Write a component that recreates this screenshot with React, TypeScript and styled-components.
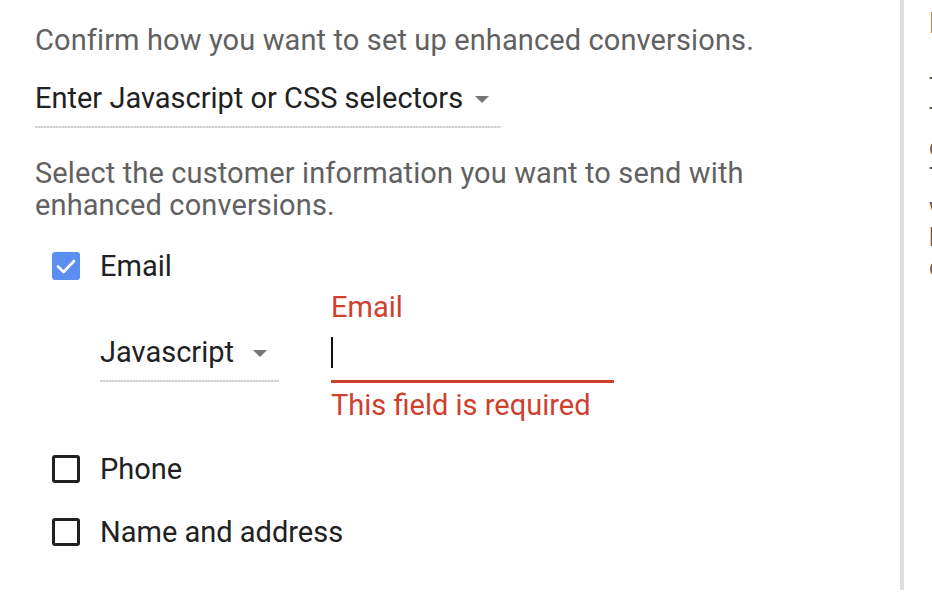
import React from "react";
import styled, { createGlobalStyle } from "styled-components";

const Global = createGlobalStyle`
  html, body { margin: 0; padding: 0; background: #fff; }
  body { font-family: Roboto, "Noto Sans", Arial, sans-serif; }
`;

const Page = styled.div`
  display: flex;
  width: 932px;
  height: 600px;
  overflow: hidden;
`;

const Main = styled.div`
  width: 900px;
  box-sizing: border-box;
  padding: 24px 0 0 35px;
  display: flex;
  flex-direction: column;
`;

const Divider = styled.div`
  width: 4px;
  height: 590px;
  background: #dedede;
  flex: none;
`;

const Side = styled.div`
  flex: 1;
  padding: 0 0 0 25px;
  overflow: hidden;
  white-space: nowrap;
  color: #555;
  font-size: 26px;
  line-height: 30px;
`;

const SideHeading = styled.div`
  margin-top: 8px;
  font-size: 30px;
  color: #333;
`;

const SideLine = styled.div<{ $gap?: number }>`
  margin-top: ${(p) => p.$gap ?? 0}px;
`;

const Prompt = styled.div<{ $mt?: number }>`
  font-size: 29px;
  line-height: 32px;
  color: #616161;
  margin-top: ${(p) => p.$mt ?? 0}px;
  max-width: 740px;
  letter-spacing: 0.12px;
`;

const Select = styled.div<{ $w: number; $mt?: number }>`
  width: ${(p) => p.$w}px;
  display: flex;
  align-items: center;
  height: 32px;
  padding-bottom: 14px;
  margin-top: ${(p) => p.$mt ?? 0}px;
  background-image: linear-gradient(to right, #cfcfcf 60%, #e6e6e6 60%);
  background-size: 3px 2px;
  background-repeat: repeat-x;
  background-position: left bottom;
`;

const SelectValue = styled.span`
  font-size: 29px;
  color: #212121;
  line-height: 32px;
`;

const Arrow = styled.span<{ $ml: number }>`
  width: 0;
  height: 0;
  margin-left: ${(p) => p.$ml}px;
  margin-top: 2px;
  border-left: 7px solid transparent;
  border-right: 7px solid transparent;
  border-top: 7px solid #757575;
`;

const Options = styled.div`
  margin-top: 29px;
  display: flex;
  flex-direction: column;
`;

const CheckRow = styled.label<{ $mt?: number }>`
  display: flex;
  align-items: center;
  gap: 20px;
  margin-left: 17px;
  margin-top: ${(p) => p.$mt ?? 0}px;
  height: 32px;
`;

const Box = styled.span<{ $checked?: boolean }>`
  width: 28px;
  height: 28px;
  box-sizing: border-box;
  border-radius: 3px;
  flex: none;
  display: flex;
  align-items: center;
  justify-content: center;
  background: ${(p) => (p.$checked ? "#5a8ef0" : "transparent")};
  border: ${(p) => (p.$checked ? "none" : "3px solid #202020")};
`;

const Label = styled.span`
  font-size: 29px;
  color: #212121;
  line-height: 32px;
`;

const Detail = styled.div`
  display: flex;
  align-items: flex-start;
  padding-left: 65px;
  margin-top: 9px;
  gap: 52px;
`;

const DetailSelect = styled.div`
  padding-top: 45px;
`;

const Field = styled.div`
  width: 283px;
  display: flex;
  flex-direction: column;
`;

const FieldLabel = styled.div`
  font-size: 29px;
  line-height: 32px;
  color: #d0402f;
`;

const InputArea = styled.div`
  height: 47px;
  margin-top: 10px;
  border-bottom: 3px solid #d0402f;
  display: flex;
  align-items: flex-start;
`;

const Caret = styled.span`
  width: 2px;
  height: 31px;
  background: #111;
  margin-top: 4px;
`;

const ErrorText = styled.div`
  font-size: 29px;
  line-height: 32px;
  color: #d0402f;
  margin-top: 6px;
`;

const Check = () => (
  <svg width="20" height="16" viewBox="0 0 20 16">
    <path d="M2 8.5 L7.5 14 L18 3" fill="none" stroke="#fff" strokeWidth="2.6" strokeLinecap="round" strokeLinejoin="round" />
  </svg>
);

export default function App() {
  return (
    <>
      <Global />
      <Page>
        <Main>
          <Prompt>Confirm how you want to set up enhanced conversions.</Prompt>
          <Select $w={466} $mt={26}>
            <SelectValue>Enter Javascript or CSS selectors</SelectValue>
            <Arrow $ml={12} />
          </Select>
          <Prompt $mt={29}>
            Select the customer information you want to send with enhanced conversions.
          </Prompt>
          <Options>
            <CheckRow>
              <Box $checked>
                <Check />
              </Box>
              <Label>Email</Label>
            </CheckRow>
            <Detail>
              <DetailSelect>
                <Select $w={179}>
                  <SelectValue>Javascript</SelectValue>
                  <Arrow $ml={19} />
                </Select>
              </DetailSelect>
              <Field>
                <FieldLabel>Email</FieldLabel>
                <InputArea>
                  <Caret />
                </InputArea>
                <ErrorText>This field is required</ErrorText>
              </Field>
            </Detail>
            <CheckRow $mt={32}>
              <Box />
              <Label>Phone</Label>
            </CheckRow>
            <CheckRow $mt={31}>
              <Box />
              <Label>Name and address</Label>
            </CheckRow>
          </Options>
        </Main>
        <Divider />
        <Side>
          <SideHeading>Enhanced</SideHeading>
          <SideLine $gap={34}>To use enhanced</SideLine>
          <SideLine>Then set up</SideLine>
          <SideLine>conversions</SideLine>
          <SideLine>Tag</SideLine>
          <SideLine>will</SideLine>
          <SideLine>be</SideLine>
          <SideLine>counted</SideLine>
        </Side>
      </Page>
    </>
  );
}
